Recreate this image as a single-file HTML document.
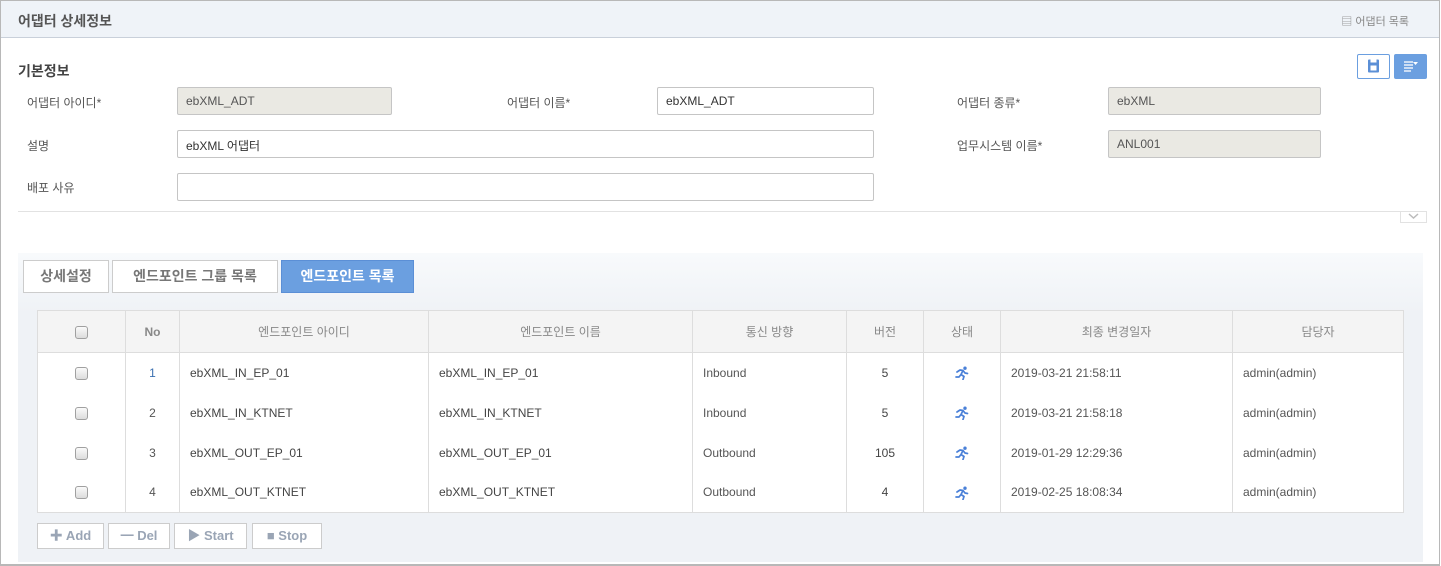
<!DOCTYPE html>
<html><head><meta charset="utf-8"><style>
*{box-sizing:border-box;margin:0;padding:0}
body{width:1441px;height:566px;background:#fff;font-family:"Liberation Sans","Noto Sans CJK KR",sans-serif;font-size:12px;color:#333;position:relative;overflow:hidden}
.frame{position:absolute;left:0;top:0;width:1440px;height:566px;border:1px solid #b8b8b8;border-bottom:2px solid #b8b8b8}
.hdr{position:absolute;left:1px;top:1px;width:1438px;height:37px;background:#eff3f8;border-bottom:1px solid #c9d0da}
.hdr .t{position:absolute;left:17px;top:10px;font-size:14px;font-weight:bold;color:#555}
.hdr .r{position:absolute;right:30px;top:12px;font-size:11px;color:#888}
.abs{position:absolute}
.lbl{position:absolute;font-size:12px;color:#555}
.inp{position:absolute;height:28px;border:1px solid #c5c5c5;border-radius:2px;background:#fff;padding:6px 8px;font-size:12px;color:#333}
.inp.g{background:#eae9e3;color:#555}
.panel{position:absolute;left:18px;top:253px;width:1405px;height:309px;background:linear-gradient(#f8fafc,#eff2f6 60px,#eff2f6)}
.tab{position:absolute;top:260px;height:33px;border:1px solid #ccc;background:#fff;font-size:14px;font-weight:bold;color:#777;text-align:center;line-height:31px}
.tab.on{background:#6b9fe0;border-color:#5b8fd6;color:#fff}
table{position:absolute;left:37px;top:310px;border-collapse:collapse;background:#fff}
td,th{border:1px solid #ddd;font-size:12px;height:40px;padding:0 10px;color:#444}
th{background:#f4f4f4;color:#888;font-weight:normal;height:42px}
tr.r td{border-top:none;border-bottom:none}
tr.r:last-child td{border-bottom:1px solid #ddd}
.c{text-align:center}
.cb{display:inline-block;width:13px;height:13px;border:1px solid #a0a0a0;border-radius:3px;background:linear-gradient(#fafafa,#dcdcdc);vertical-align:middle}
.btn{position:absolute;top:523px;height:26px;border:1px solid #ccc;background:#fff;color:#9aa5b5;font-weight:bold;font-size:13px;line-height:24px;text-align:center}
.run{display:inline-block;vertical-align:middle}
</style></head><body>
<div class="frame"></div>
<div class="hdr"><div class="t">어댑터 상세정보</div><div class="r">▤ 어댑터 목록</div></div>
<div class="lbl" style="left:18px;top:61px;font-size:14px;font-weight:bold;color:#444">기본정보</div>
<div class="abs" style="left:1357px;top:54px;width:33px;height:25px;border:1px solid #6b9fe0;border-radius:2px;background:#fff">
<svg width="31" height="23" viewBox="0 0 31 23"><rect x="10" y="4.5" width="11" height="13" rx="1" fill="#5b8fd6"/><rect x="12.5" y="4.5" width="6" height="3" fill="#fff"/><rect x="12.5" y="10.5" width="6" height="5" fill="#fff"/></svg></div>
<div class="abs" style="left:1394px;top:54px;width:33px;height:25px;border-radius:2px;background:#6b9fe0">
<svg width="33" height="25"><g stroke="#fff" stroke-width="1.3"><line x1="10" y1="8" x2="19" y2="8"/><line x1="10" y1="11" x2="19" y2="11"/><line x1="10" y1="14" x2="19" y2="14"/><line x1="10" y1="17" x2="17" y2="17"/></g><path d="M19 8h5l-2.5 3z" fill="#fff"/></svg></div>
<div class="lbl" style="left:27px;top:94px">어댑터 아이디*</div>
<div class="inp g" style="left:177px;top:87px;width:215px">ebXML_ADT</div>
<div class="lbl" style="left:507px;top:94px">어댑터 이름*</div>
<div class="inp" style="left:657px;top:87px;width:217px">ebXML_ADT</div>
<div class="lbl" style="left:957px;top:94px">어댑터 종류*</div>
<div class="inp g" style="left:1108px;top:87px;width:213px">ebXML</div>
<div class="lbl" style="left:27px;top:137px">설명</div>
<div class="inp" style="left:177px;top:130px;width:697px">ebXML 어댑터</div>
<div class="lbl" style="left:957px;top:137px">업무시스템 이름*</div>
<div class="inp g" style="left:1108px;top:130px;width:213px">ANL001</div>
<div class="lbl" style="left:27px;top:179px">배포 사유</div>
<div class="inp" style="left:177px;top:173px;width:697px"></div>
<div class="abs" style="left:18px;top:211px;width:1409px;height:1px;background:#e2e2e2"></div>
<div class="abs" style="left:1400px;top:211px;width:27px;height:12px;border:1px solid #e2e2e2;border-top:none"><svg width="25" height="11"><path d="M8 3l4.5 4 4.5-4" fill="none" stroke="#bbb" stroke-width="1.5"/></svg></div>
<div class="panel"></div>
<div class="tab" style="left:23px;width:86px">상세설정</div>
<div class="tab" style="left:112px;width:166px">엔드포인트 그룹 목록</div>
<div class="tab on" style="left:281px;width:133px">엔드포인트 목록</div>
<table>
<tr><th style="width:88px"><span class="cb"></span></th><th style="width:54px;font-weight:bold">No</th><th style="width:249px">엔드포인트 아이디</th><th style="width:264px">엔드포인트 이름</th><th style="width:154px">통신 방향</th><th style="width:77px">버전</th><th style="width:77px">상태</th><th style="width:232px">최종 변경일자</th><th style="width:171px">담당자</th></tr>
<tr class="r"><td class="c"><span class="cb"></span></td><td class="c" style="color:#3a6fb0">1</td><td>ebXML_IN_EP_01</td><td>ebXML_IN_EP_01</td><td style="color:#555">Inbound</td><td class="c">5</td><td class="c"><svg class="run" width="14" height="14" viewBox="0 0 14 14"><circle cx="10" cy="2.2" r="1.7" fill="#4a80d8"/><path d="M2 6l3-2 3 0.5 2 2.5 2.5 0.5M8 4.5l-2 4 3 2-1 3M6 8.5l-2 2.5-3 0" fill="none" stroke="#4a80d8" stroke-width="1.7" stroke-linecap="round" stroke-linejoin="round"/></svg></td><td style="color:#555">2019-03-21 21:58:11</td><td style="color:#555">admin(admin)</td></tr>
<tr class="r"><td class="c"><span class="cb"></span></td><td class="c" style="color:#555">2</td><td>ebXML_IN_KTNET</td><td>ebXML_IN_KTNET</td><td style="color:#555">Inbound</td><td class="c">5</td><td class="c"><svg class="run" width="14" height="14" viewBox="0 0 14 14"><circle cx="10" cy="2.2" r="1.7" fill="#4a80d8"/><path d="M2 6l3-2 3 0.5 2 2.5 2.5 0.5M8 4.5l-2 4 3 2-1 3M6 8.5l-2 2.5-3 0" fill="none" stroke="#4a80d8" stroke-width="1.7" stroke-linecap="round" stroke-linejoin="round"/></svg></td><td style="color:#555">2019-03-21 21:58:18</td><td style="color:#555">admin(admin)</td></tr>
<tr class="r"><td class="c"><span class="cb"></span></td><td class="c" style="color:#555">3</td><td>ebXML_OUT_EP_01</td><td>ebXML_OUT_EP_01</td><td style="color:#555">Outbound</td><td class="c">105</td><td class="c"><svg class="run" width="14" height="14" viewBox="0 0 14 14"><circle cx="10" cy="2.2" r="1.7" fill="#4a80d8"/><path d="M2 6l3-2 3 0.5 2 2.5 2.5 0.5M8 4.5l-2 4 3 2-1 3M6 8.5l-2 2.5-3 0" fill="none" stroke="#4a80d8" stroke-width="1.7" stroke-linecap="round" stroke-linejoin="round"/></svg></td><td style="color:#555">2019-01-29 12:29:36</td><td style="color:#555">admin(admin)</td></tr>
<tr class="r"><td class="c"><span class="cb"></span></td><td class="c" style="color:#555">4</td><td>ebXML_OUT_KTNET</td><td>ebXML_OUT_KTNET</td><td style="color:#555">Outbound</td><td class="c">4</td><td class="c"><svg class="run" width="14" height="14" viewBox="0 0 14 14"><circle cx="10" cy="2.2" r="1.7" fill="#4a80d8"/><path d="M2 6l3-2 3 0.5 2 2.5 2.5 0.5M8 4.5l-2 4 3 2-1 3M6 8.5l-2 2.5-3 0" fill="none" stroke="#4a80d8" stroke-width="1.7" stroke-linecap="round" stroke-linejoin="round"/></svg></td><td style="color:#555">2019-02-25 18:08:34</td><td style="color:#555">admin(admin)</td></tr>
</table>
<div class="btn" style="left:37px;width:67px">✚ Add</div>
<div class="btn" style="left:108px;width:62px">━ Del</div>
<div class="btn" style="left:174px;width:73px">▶ Start</div>
<div class="btn" style="left:252px;width:70px">■ Stop</div>
</body></html>
